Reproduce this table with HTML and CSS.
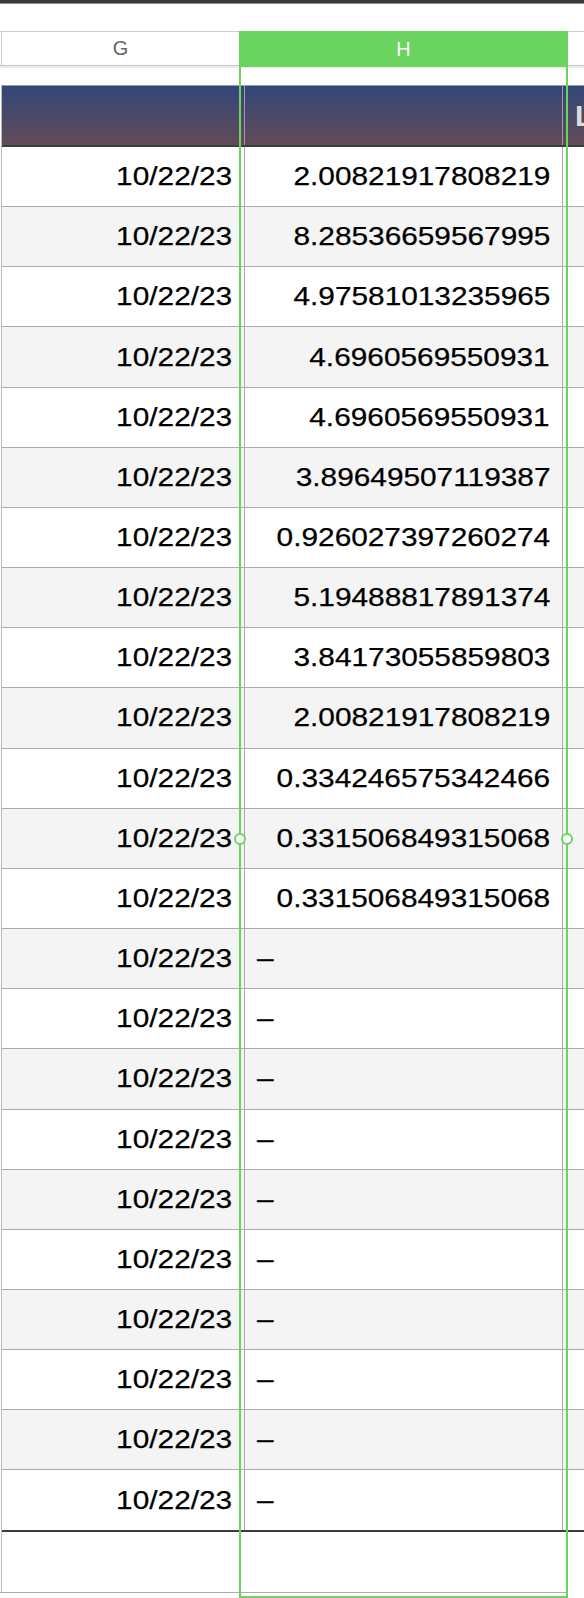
FILE: index.html
```html
<!DOCTYPE html>
<html>
<head>
<meta charset="utf-8">
<link rel="stylesheet" href="styles.css">
</head>
<body>
<div class="sheet">
  <div class="topbar"></div>
  <div class="colheads">
    <div class="colhead g">G</div>
    <div class="colhead h">H</div>
    <div class="colhead rest"></div>
  </div>
  <div class="table">
    <div class="band">
      <div class="cell c-g"></div>
      <div class="cell c-h"></div>
      <div class="cell c-rest band-title">L</div>
    </div>
    <div class="row"><div class="cell c-g"><span class="t">10/22/23</span></div><div class="cell c-h num"><span class="t">2.00821917808219</span></div><div class="cell c-rest"></div></div>
    <div class="row"><div class="cell c-g"><span class="t">10/22/23</span></div><div class="cell c-h num"><span class="t">8.28536659567995</span></div><div class="cell c-rest"></div></div>
    <div class="row"><div class="cell c-g"><span class="t">10/22/23</span></div><div class="cell c-h num"><span class="t">4.97581013235965</span></div><div class="cell c-rest"></div></div>
    <div class="row"><div class="cell c-g"><span class="t">10/22/23</span></div><div class="cell c-h num"><span class="t">4.6960569550931</span></div><div class="cell c-rest"></div></div>
    <div class="row"><div class="cell c-g"><span class="t">10/22/23</span></div><div class="cell c-h num"><span class="t">4.6960569550931</span></div><div class="cell c-rest"></div></div>
    <div class="row"><div class="cell c-g"><span class="t">10/22/23</span></div><div class="cell c-h num"><span class="t">3.89649507119387</span></div><div class="cell c-rest"></div></div>
    <div class="row"><div class="cell c-g"><span class="t">10/22/23</span></div><div class="cell c-h num"><span class="t">0.926027397260274</span></div><div class="cell c-rest"></div></div>
    <div class="row"><div class="cell c-g"><span class="t">10/22/23</span></div><div class="cell c-h num"><span class="t">5.19488817891374</span></div><div class="cell c-rest"></div></div>
    <div class="row"><div class="cell c-g"><span class="t">10/22/23</span></div><div class="cell c-h num"><span class="t">3.84173055859803</span></div><div class="cell c-rest"></div></div>
    <div class="row"><div class="cell c-g"><span class="t">10/22/23</span></div><div class="cell c-h num"><span class="t">2.00821917808219</span></div><div class="cell c-rest"></div></div>
    <div class="row"><div class="cell c-g"><span class="t">10/22/23</span></div><div class="cell c-h num"><span class="t">0.334246575342466</span></div><div class="cell c-rest"></div></div>
    <div class="row"><div class="cell c-g"><span class="t">10/22/23</span></div><div class="cell c-h num"><span class="t">0.331506849315068</span></div><div class="cell c-rest"></div></div>
    <div class="row"><div class="cell c-g"><span class="t">10/22/23</span></div><div class="cell c-h num"><span class="t">0.331506849315068</span></div><div class="cell c-rest"></div></div>
    <div class="row"><div class="cell c-g"><span class="t">10/22/23</span></div><div class="cell c-h dash"><span class="t">–</span></div><div class="cell c-rest"></div></div>
    <div class="row"><div class="cell c-g"><span class="t">10/22/23</span></div><div class="cell c-h dash"><span class="t">–</span></div><div class="cell c-rest"></div></div>
    <div class="row"><div class="cell c-g"><span class="t">10/22/23</span></div><div class="cell c-h dash"><span class="t">–</span></div><div class="cell c-rest"></div></div>
    <div class="row"><div class="cell c-g"><span class="t">10/22/23</span></div><div class="cell c-h dash"><span class="t">–</span></div><div class="cell c-rest"></div></div>
    <div class="row"><div class="cell c-g"><span class="t">10/22/23</span></div><div class="cell c-h dash"><span class="t">–</span></div><div class="cell c-rest"></div></div>
    <div class="row"><div class="cell c-g"><span class="t">10/22/23</span></div><div class="cell c-h dash"><span class="t">–</span></div><div class="cell c-rest"></div></div>
    <div class="row"><div class="cell c-g"><span class="t">10/22/23</span></div><div class="cell c-h dash"><span class="t">–</span></div><div class="cell c-rest"></div></div>
    <div class="row"><div class="cell c-g"><span class="t">10/22/23</span></div><div class="cell c-h dash"><span class="t">–</span></div><div class="cell c-rest"></div></div>
    <div class="row"><div class="cell c-g"><span class="t">10/22/23</span></div><div class="cell c-h dash"><span class="t">–</span></div><div class="cell c-rest"></div></div>
    <div class="row last"><div class="cell c-g"><span class="t">10/22/23</span></div><div class="cell c-h dash"><span class="t">–</span></div><div class="cell c-rest"></div></div>
    <div class="footer"></div>
  </div>
  <div class="selection">
    <span class="handle left"></span>
    <span class="handle right"></span>
  </div>
</div>
</body>
</html>
```

FILE: styles.css
```css
html, body {
  margin: 0;
  padding: 0;
  background: #ffffff;
}
body {
  width: 584px;
  height: 1598px;
  overflow: hidden;
  font-family: "Liberation Sans", Arial, sans-serif;
}
.sheet {
  position: relative;
  width: 584px;
  height: 1598px;
  overflow: hidden;
}
.topbar {
  height: 3px;
  background: #3b3b3b;
  border-bottom: 1px solid #8a8a8a;
}
.colheads {
  margin-top: 27px;
  display: flex;
  height: 35px;
  box-sizing: border-box;
  border-top: 1px solid #cfcfcf;
  border-bottom: 1px solid #c6c6c6;
  box-shadow: 0 2px 0 #ececec;
  padding-left: 1px;
}
.colhead {
  display: flex;
  align-items: center;
  justify-content: center;
  font-size: 20px;
  color: #666666;
}
.colhead.g {
  width: 237px;
  border-left: 1px solid #cfcfcf;
}
.colhead.h {
  width: 329px;
  flex: none;
  margin-top: -1px;
  margin-bottom: -2px;
  background: #6bd460;
  color: #ffffff;
}
.colhead.rest {
  flex: 1;
}
.table {
  margin-top: 19px;
  margin-left: 1px;
  border-left: 1px solid #bdbdbd;
  width: 700px;
}
.band {
  display: flex;
  height: 62px;
  box-sizing: border-box;
  border-top: 1px solid #9a9a9a;
  border-bottom: 2px solid #3c3c3c;
  background: linear-gradient(to bottom, #33467a, #634b57);
}
.band .cell {
  border-right-color: #9f9aa8;
}
.band .band-title {
  display: flex;
  align-items: center;
  padding-left: 12px;
  font-size: 30px;
  font-weight: bold;
  letter-spacing: 0;
  color: #dcdcdc;
}
.row {
  display: flex;
  height: 60.17px;
  box-sizing: border-box;
  border-bottom: 1px solid #ababab;
  background: #ffffff;
}
.row:nth-child(odd) {
  background: #f4f4f4;
}
.row.last {
  border-bottom: 2px solid #3c3c3c;
  height: 61.17px;
}
.cell {
  box-sizing: border-box;
  display: flex;
  align-items: center;
  font-size: 26.5px;
  color: #000000;
  border-right: 1px solid #ababab;
}
.t {
  display: inline-block;
  transform: scaleX(1.125);
  transform-origin: right center;
  -webkit-text-stroke: 0.25px #000;
}
.c-g {
  width: 243px;
  justify-content: flex-end;
  padding-right: 12px;
}
.c-h {
  width: 318px;
}
.c-h.num {
  justify-content: flex-end;
  padding-right: 12px;
}
.c-h.dash {
  justify-content: flex-start;
  padding-left: 12px;
}
.c-h.dash .t {
  transform-origin: left center;
}
.c-rest {
  flex: 1;
  border-right: none;
}
.footer {
  height: 61px;
  box-sizing: border-box;
  border-bottom: 1px solid #ababab;
  margin-left: -2px;
  width: 567px;
}
.selection {
  position: absolute;
  left: 239px;
  top: 31px;
  width: 329px;
  height: 1567px;
  box-sizing: border-box;
  border: 2px solid #6bd460;
  pointer-events: none;
}
.handle {
  position: absolute;
  top: 800px;
  width: 12px;
  height: 12px;
  box-sizing: border-box;
  border-radius: 50%;
  border: 2px solid #6bd460;
  background: #ffffff;
}
.handle.left {
  left: -7px;
}
.handle.right {
  left: 320px;
}
```
